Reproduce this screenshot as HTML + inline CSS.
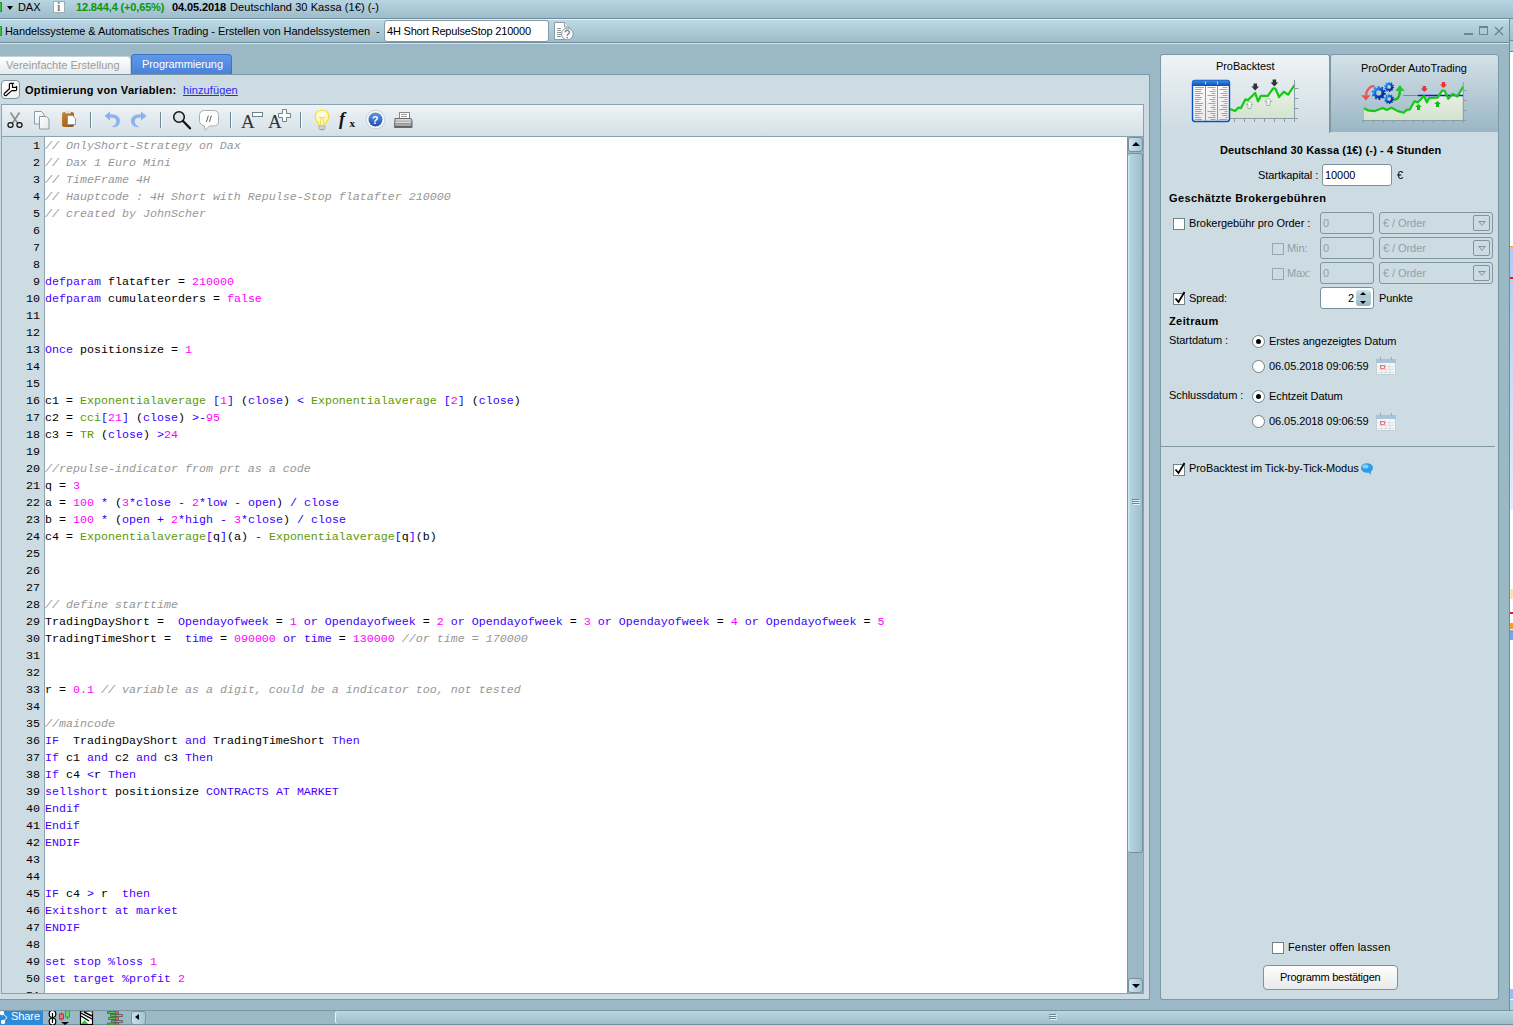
<!DOCTYPE html>
<html><head><meta charset="utf-8">
<style>
*{box-sizing:border-box;margin:0;padding:0}
html,body{width:1513px;height:1025px;overflow:hidden}
body{position:relative;background:#9bb8c6;font-family:"Liberation Sans",sans-serif;font-size:11px;color:#000;letter-spacing:-0.07px}
.a{position:absolute}
.t{position:absolute;white-space:pre;line-height:13px}
.bo{font-weight:bold;letter-spacing:0.2px}
/* bars */
#topbar{left:0;top:0;width:1513px;height:19px;background:linear-gradient(#b6d4e1,#9ebccb);border-bottom:1px solid #6f8d9a}
#titlebar{left:0;top:19px;width:1509px;height:24px;background:linear-gradient(#bad8e5,#9fbccb);border-top:1px solid #dff2fa;border-bottom:1px solid #6f8c99}
#band{left:0;top:43px;width:1509px;height:1px;background:#d3e6ee}
#rightedge{left:1509px;top:19px;width:1px;height:991px;background:#6f8c99}
#bg2{left:1510px;top:19px;width:3px;height:991px;background:#fff}
/* left panel */
#lp{left:0;top:74px;width:1150px;height:926px;background:#cddbe2;border:1px solid #7d98a5;border-left:none}
#toolbar{left:1px;top:104px;width:1143px;height:32px;background:linear-gradient(#eef3f6,#d4e0e6);border:1px solid #89a4b0;border-bottom:none}
#editor{left:1px;top:136px;width:1143px;height:858px;background:#fff;border:1px solid #89a4b0;overflow:hidden}
#gutter{position:absolute;left:0;top:0;width:43px;height:856px;background:#cddbe2;border-right:1px solid #8aa3ae}
#nums{position:absolute;left:0;top:1px;width:38px;text-align:right;font-family:"Liberation Mono",monospace;font-size:11.67px;line-height:17px;white-space:pre;color:#000;letter-spacing:0}
#code{position:absolute;left:43px;top:1px;font-family:"Liberation Mono",monospace;font-size:11.67px;line-height:17px;white-space:pre;color:#000;letter-spacing:0}
#code i{font-style:normal}
#code .c{color:#979797;font-style:italic}
#code .k{color:#4800ff}
#code .b{color:#3800ff}
#code .n{color:#ff00ff}
#code .f{color:#609a00}
#code .o{color:#2000ff}
#vscroll{position:absolute;left:1125px;top:0;width:16px;height:856px;background:#9cb8c6;border-left:1px solid #7b96a2}
.sbtn{position:absolute;left:0;width:15px;height:15px;border-radius:3px;background:linear-gradient(90deg,#cfe6f0,#a3c2cf);border:1px solid #7690a0}
#thumb{position:absolute;left:0;top:16px;width:15px;height:700px;border-radius:3px;background:linear-gradient(90deg,#d6eef8 0,#b4d4e1 15%,#9fbecb 100%);border:1px solid #7690a0;border-left:none}
/* tabs */
#tab1{left:0;top:56px;width:131px;height:18px;background:linear-gradient(#ffffff,#e6eaec);border-radius:0 4px 0 0;border:1px solid #c6d2d8;border-left:none;border-bottom:none}
#tab2{left:131px;top:54px;width:101px;height:20px;background:linear-gradient(#5e98ea,#4a82da);border-radius:4px 4px 0 0;border:1px solid #3d72c6;border-bottom:none}
/* right panel */
#rp{left:1160px;top:132px;width:339px;height:868px;background:#cddbe2;border:1px solid #7d98a5;border-top:none;border-radius:0 0 3px 3px}
#rtab1{left:1160px;top:54px;width:170px;height:79px;background:linear-gradient(#eef3f5,#cddbe2);border:1px solid #7d98a5;border-bottom:none;border-radius:3px 3px 0 0}
#rtab2{left:1330px;top:54px;width:169px;height:79px;background:linear-gradient(#d4e1e8,#9ab6c5);border:1px solid #7d98a5;border-radius:3px 3px 0 0}
#statusbar{left:0;top:1010px;width:1513px;height:15px;background:#9bb8c6;border-top:1px solid #7a96a3}
.inp{position:absolute;background:#fff;border:1px solid #7a909a;border-radius:3px}
.dis{position:absolute;background:#cddbe2;border:1px solid #7f959f;border-radius:3px}
.dd{position:absolute;width:17px;height:16px;border:1px solid #7f959f;border-radius:2px}
.dd:after{content:"";position:absolute;left:4px;top:5px;border-left:4px solid transparent;border-right:4px solid transparent;border-top:5px solid #7f959f}
.dd:before{content:"";position:absolute;left:5.5px;top:6px;border-left:2.5px solid transparent;border-right:2.5px solid transparent;border-top:3px solid #cddbe2;z-index:1}
.cb{position:absolute;width:12px;height:12px;background:#fff;border:1px solid #6f838c}
.cbd{position:absolute;width:12px;height:12px;background:#cddbe2;border:1px solid #94a8b2}
.rad{position:absolute;width:13px;height:13px;border-radius:50%;background:#fff;border:1px solid #6f838c}
.rad.on:after{content:"";position:absolute;left:3px;top:3px;width:5px;height:5px;border-radius:50%;background:#000}
.g{color:#8da1ab}
</style></head><body>
<div id="topbar" class="a"></div>
<div class="a" style="left:0;top:2px;width:2px;height:10px;background:#3cc03c;border:1px solid #1d9a1d;border-left:none"></div>
<div class="a" style="left:7px;top:6px;width:0;height:0;border-left:3.5px solid transparent;border-right:3.5px solid transparent;border-top:4px solid #000"></div>
<div class="t" style="left:18px;top:1px">DAX</div>
<div class="a" style="left:53px;top:1px;width:12px;height:12px;background:#fff;border:1px solid #a2acb0"></div>
<div class="t" style="left:57px;top:1px;font-size:12px;font-weight:bold;color:#7a8286;font-family:'Liberation Serif',serif">i</div>
<div class="t bo" style="left:76px;top:1px;color:#0b960b;letter-spacing:-0.15px">12.844,4 (+0,65%)</div>
<div class="t bo" style="left:172px;top:1px;letter-spacing:-0.1px">04.05.2018</div>
<div class="t" style="left:230px;top:1px;letter-spacing:0.08px">Deutschland 30 Kassa (1€) (-)</div>

<div id="titlebar" class="a"></div>
<div id="band" class="a"></div>
<div class="a" style="left:0;top:26px;width:2px;height:10px;background:#3cc03c;border:1px solid #1d9a1d;border-left:none"></div>
<div class="t" style="left:5px;top:25px">Handelssysteme &amp; Automatisches Trading - Erstellen von Handelssystemen  -</div>
<div class="inp" style="left:384px;top:20px;width:165px;height:22px;border-color:#8699a2"></div>
<div class="t" style="left:387px;top:25px;letter-spacing:-0.2px">4H Short RepulseStop 210000</div>
<svg class="a" style="left:550px;top:18px" width="30" height="26" viewBox="0 0 30 26"><path d="M4.5 4.5H14.5L19 9V21.5H4.5Z" fill="#fff" stroke="#8e9ba1"/><path d="M14.5 4.5V9H19" fill="#f2f2f2" stroke="#8e9ba1"/><path d="M7 10.5h4M7 12.5h4M7 14.5h4M7 16.5h4M7 18.5h4" stroke="#7f8b91" stroke-width=".9"/><circle cx="17.3" cy="16" r="5.8" fill="#fafafa" stroke="#8e9ba1"/><path d="M15.2 14.3a2.1 2.1 0 1 1 3 1.9c-.7.35-.9.8-.9 1.5" fill="none" stroke="#7c888e" stroke-width="1.4"/><circle cx="17.3" cy="19.6" r=".85" fill="#7c888e"/></svg>
<div class="a" style="left:1464px;top:33px;width:9px;height:2px;background:#6c8592"></div>
<div class="a" style="left:1479px;top:26px;width:9px;height:9px;border:1px solid #6c8592;border-top-width:2px"></div>
<svg class="a" style="left:1494px;top:26px" width="10" height="10"><path d="M1 1L9 9M9 1L1 9" stroke="#6c8592" stroke-width="1.4"/></svg>
<div id="rightedge" class="a"></div>
<div id="bg2" class="a"></div>

<div id="tab1" class="a"></div>
<div class="t" style="left:6px;top:59px;color:#9c9c9c;letter-spacing:0.02px">Vereinfachte Erstellung</div>
<div id="tab2" class="a"></div>
<div class="t" style="left:142px;top:58px;color:#fff">Programmierung</div>

<div id="lp" class="a"></div>
<div class="a" style="left:1px;top:80px;width:19px;height:19px;background:linear-gradient(135deg,#fff,#eee);border:1px solid #7d929b;border-radius:4px"></div>
<svg class="a" style="left:0;top:76px" width="24" height="26" viewBox="0 0 24 26"><path d="M9.4 12.7V8.4Q9.4 7.3 10.4 7.3H13.6L12.5 7.8V11.4H16.2L16.6 10.5V13.5Q16.6 14.6 15.5 14.6H11.7L6.6 19.2Q5.3 20.2 4.4 19.1Q3.7 18.1 4.6 17.3Z" fill="#fff" stroke="#000" stroke-width="1.2" stroke-linejoin="round"/></svg>
<div class="t bo" style="left:25px;top:84px;letter-spacing:0.3px">Optimierung von Variablen:</div>
<div class="t" style="left:183px;top:84px;color:#2b2bf0;text-decoration:underline;letter-spacing:0.1px">hinzufügen</div>

<div id="toolbar" class="a"></div>
<svg class="a" style="left:0;top:104px" width="420" height="33" viewBox="0 0 420 33">
<defs>
<linearGradient id="gpg" x1="0" y1="0" x2="1" y2="1"><stop offset="0" stop-color="#fff"/><stop offset="1" stop-color="#e3e6e8"/></linearGradient>
<linearGradient id="gbr" x1="0" y1="0" x2="1" y2="1"><stop offset="0" stop-color="#c88a3a"/><stop offset="1" stop-color="#8f4f10"/></linearGradient>
<linearGradient id="gbl" x1="0" y1="0" x2="0" y2="1"><stop offset="0" stop-color="#5f95e6"/><stop offset="1" stop-color="#1e4fb0"/></linearGradient>
<linearGradient id="gpr" x1="0" y1="0" x2="0" y2="1"><stop offset="0" stop-color="#e8e8e8"/><stop offset=".5" stop-color="#9a9a9a"/><stop offset="1" stop-color="#555"/></linearGradient>
</defs>
<path d="M10.5 8.5L17.5 19M19.5 8.5L12.5 19" stroke="#8c8c8c" stroke-width="1.6"/>
<ellipse cx="10.5" cy="21" rx="2.6" ry="2.3" fill="none" stroke="#111" stroke-width="1.2"/>
<ellipse cx="19.5" cy="21" rx="2.6" ry="2.3" fill="none" stroke="#111" stroke-width="1.2"/>
<path d="M34.5 7.5h7l2.5 2.5v10h-9.5z" fill="url(#gpg)" stroke="#8c9ca4"/>
<path d="M39.5 12.5h7l2.5 2.5v10h-9.5z" fill="url(#gpg)" stroke="#8c9ca4"/>
<rect x="62" y="8" width="12" height="15" rx="2" fill="url(#gbr)"/>
<rect x="65" y="7" width="6" height="2.5" rx="1" fill="#ddd"/>
<path d="M67.5 11.5h5l3 3v6h-8z" fill="#fff" stroke="#8c9ca4"/>
<path d="M90.5 8v16M160.5 8v16M230.5 8v16M300.5 8v16" stroke="#6d8a99"/>
<path d="M91.5 8v16M161.5 8v16M231.5 8v16M301.5 8v16" stroke="#f3fbff"/>
<path d="M104.5 12L110 7.5V16.5Z" fill="#88b0ee"/><path d="M109 10.5C117 9.5 121.5 14 119.5 19.5C118 23 114.5 23.5 111.5 23C114.5 22 116.5 20 116.3 17C116 14 113 13.2 109 13.5Z" fill="#8cb4ee"/>
<path d="M146.5 12L141 7.5V16.5Z" fill="#88b0ee"/><path d="M142 10.5C134 9.5 129.5 14 131.5 19.5C133 23 136.5 23.5 139.5 23C136.5 22 134.5 20 134.7 17C135 14 138 13.2 142 13.5Z" fill="#8cb4ee"/>
<circle cx="179" cy="13" r="5.3" fill="#dde2e5" stroke="#111" stroke-width="1.5"/>
<path d="M183 17L190 24.3" stroke="#111" stroke-width="2.3" stroke-linecap="round"/>
<path d="M204.5 6.5H213.5Q218.5 6.5 218.5 11.5V17Q218.5 22 213.5 22H209.5L205 26.2L204.4 21.8Q199.5 21 199.5 16.5V11.5Q199.5 6.5 204.5 6.5Z" fill="#fff" stroke="#a9adb0"/>
<path d="M206.4 18l2-6.5M209.4 18l2-6.5" stroke="#555" stroke-width=".9"/>
<text x="241" y="24" font-family="Liberation Serif" font-size="19" fill="#333">A</text>
<rect x="252.5" y="8.5" width="10" height="4" fill="#fff" stroke="#6f838c"/>
<text x="268" y="24" font-family="Liberation Serif" font-size="19" fill="#333">A</text>
<path d="M282.5 5.5h4v4h4v4h-4v4h-4v-4h-4v-4h4z" fill="#fff" stroke="#6f838c"/>
<radialGradient id="gbulb" cx=".45" cy=".3" r=".7"><stop offset="0" stop-color="#fffef0"/><stop offset="1" stop-color="#fff690"/></radialGradient>
<path d="M319 21.8L318.6 19Q315.3 16.5 315.3 12.3Q315.3 6.2 322 6.2Q328.7 6.2 328.7 12.3Q328.7 16.5 325.4 19L325 21.8Z" fill="url(#gbulb)" stroke="#f3dc30" stroke-width="1.1"/>
<path d="M318.6 13.6H325.4M320.3 13.8Q322 17.2 323.7 13.8M320.6 15.5V21.5M323.4 15.5V21.5" stroke="#e9cf60" stroke-width=".8" fill="none"/>
<rect x="319" y="22" width="6" height="3.2" fill="#d4d4d4" stroke="#a0a0a0" stroke-width=".6"/>
<rect x="320.5" y="25" width="3" height="1.2" fill="#999"/>
<text x="339" y="21" font-family="Liberation Serif" font-style="italic" font-weight="bold" font-size="18" fill="#111">f</text>
<text x="349.5" y="23" font-family="Liberation Serif" font-weight="bold" font-size="11" fill="#111">x</text>
<circle cx="375.5" cy="15.5" r="9.3" fill="#f6f9fa" stroke="#c7d1d5"/>
<circle cx="375.5" cy="15.5" r="7" fill="url(#gbl)"/>
<text x="371.8" y="19.8" font-family="Liberation Sans" font-weight="bold" font-size="11" fill="#fff">?</text>
<rect x="399.5" y="8.5" width="10" height="6" fill="#fff" stroke="#888"/>
<path d="M401 10.5h6M401 12.5h6" stroke="#999"/>
<path d="M395 14.5h16l1 2v7h-17.5z" fill="url(#gpr)" stroke="#666"/>
<path d="M395 18.5h16M395 21h16" stroke="#eee" stroke-width=".8"/>
</svg>

<div id="editor" class="a">
<div id="gutter"></div>
<div id="nums">1
2
3
4
5
6
7
8
9
10
11
12
13
14
15
16
17
18
19
20
21
22
23
24
25
26
27
28
29
30
31
32
33
34
35
36
37
38
39
40
41
42
43
44
45
46
47
48
49
50
51</div>
<div id="code"><i class=c>// OnlyShort-Strategy on Dax</i>
<i class=c>// Dax 1 Euro Mini</i>
<i class=c>// TimeFrame 4H</i>
<i class=c>// Hauptcode : 4H Short with Repulse-Stop flatafter 210000</i>
<i class=c>// created by JohnScher</i>



<i class=k>defparam</i> flatafter = <i class=n>210000</i>
<i class=k>defparam</i> cumulateorders = <i class=n>false</i>


<i class=k>Once</i> positionsize = <i class=n>1</i>


c1 = <i class=f>Exponentialaverage</i> <i class=o>[</i><i class=n>1</i><i class=o>]</i> (<i class=b>close</i>) <i class=o>&lt;</i> <i class=f>Exponentialaverage</i> <i class=o>[</i><i class=n>2</i><i class=o>]</i> (<i class=b>close</i>)
c2 = <i class=f>cci</i><i class=o>[</i><i class=n>21</i><i class=o>]</i> (<i class=b>close</i>) <i class=o>&gt;</i><i class=o>-</i><i class=n>95</i>
c3 = <i class=f>TR</i> (<i class=b>close</i>) <i class=o>&gt;</i><i class=n>24</i>

<i class=c>//repulse-indicator from prt as a code</i>
q = <i class=n>3</i>
a = <i class=n>100</i> <i class=o>*</i> (<i class=n>3</i><i class=o>*</i><i class=b>close</i> <i class=o>-</i> <i class=n>2</i><i class=o>*</i><i class=b>low</i> <i class=o>-</i> <i class=b>open</i>) <i class=o>/</i> <i class=b>close</i>
b = <i class=n>100</i> <i class=o>*</i> (<i class=b>open</i> <i class=o>+</i> <i class=n>2</i><i class=o>*</i><i class=b>high</i> <i class=o>-</i> <i class=n>3</i><i class=o>*</i><i class=b>close</i>) <i class=o>/</i> <i class=b>close</i>
c4 = <i class=f>Exponentialaverage</i><i class=o>[</i>q<i class=o>]</i>(a) <i class=o>-</i> <i class=f>Exponentialaverage</i><i class=o>[</i>q<i class=o>]</i>(b)



<i class=c>// define starttime</i>
TradingDayShort =  <i class=b>Opendayofweek</i> = <i class=n>1</i> <i class=k>or</i> <i class=b>Opendayofweek</i> = <i class=n>2</i> <i class=k>or</i> <i class=b>Opendayofweek</i> = <i class=n>3</i> <i class=k>or</i> <i class=b>Opendayofweek</i> = <i class=n>4</i> <i class=k>or</i> <i class=b>Opendayofweek</i> = <i class=n>5</i>
TradingTimeShort =  <i class=b>time</i> = <i class=n>090000</i> <i class=k>or</i> <i class=b>time</i> = <i class=n>130000</i> <i class=c>//or time = 170000</i>


r = <i class=n>0.1</i> <i class=c>// variable as a digit, could be a indicator too, not tested</i>

<i class=c>//maincode</i>
<i class=k>IF</i>  TradingDayShort <i class=k>and</i> TradingTimeShort <i class=k>Then</i>
<i class=k>If</i> c1 <i class=k>and</i> c2 <i class=k>and</i> c3 <i class=k>Then</i>
<i class=k>If</i> c4 <i class=o>&lt;</i>r <i class=k>Then</i>
<i class=k>sellshort</i> positionsize <i class=k>CONTRACTS</i> <i class=k>AT</i> <i class=k>MARKET</i>
<i class=k>Endif</i>
<i class=k>Endif</i>
<i class=k>ENDIF</i>


<i class=k>IF</i> c4 <i class=o>&gt;</i> r  <i class=k>then</i>
<i class=k>Exitshort</i> <i class=k>at</i> <i class=k>market</i>
<i class=k>ENDIF</i>

<i class=k>set</i> <i class=k>stop</i> <i class=k>%loss</i> <i class=n>1</i>
<i class=k>set</i> <i class=k>target</i> <i class=k>%profit</i> <i class=n>2</i>
</div>
<div id="vscroll">
<div class="sbtn" style="top:0"><div style="position:absolute;left:3px;top:4px;border-left:4px solid transparent;border-right:4px solid transparent;border-bottom:4px solid #000"></div></div>
<div id="thumb"><div style="position:absolute;left:4px;top:345px;width:7px;height:1px;background:#6f8590;box-shadow:0 2px 0 #6f8590,0 4px 0 #6f8590,1px 1px 0 #e0f2fa,1px 3px 0 #e0f2fa,1px 5px 0 #e0f2fa"></div></div>
<div class="sbtn" style="top:841px"><div style="position:absolute;left:3px;top:5px;border-left:4px solid transparent;border-right:4px solid transparent;border-top:4px solid #000"></div></div>
</div>
</div>

<div id="rtab2" class="a"></div>
<div id="rp" class="a"></div>
<div id="rtab1" class="a"></div>
<div class="t" style="left:1216px;top:60px">ProBacktest</div>
<div class="t" style="left:1361px;top:62px">ProOrder AutoTrading</div>
<svg class="a" style="left:1161px;top:55px" width="338" height="78" viewBox="1161 55 338 78">
<defs>
<linearGradient id="ghd" x1="0" y1="0" x2="0" y2="1"><stop offset="0" stop-color="#3c8ee0"/><stop offset="1" stop-color="#0a48be"/></linearGradient>
<linearGradient id="gcol" x1="0" y1="0" x2="0" y2="1"><stop offset="0" stop-color="#fff"/><stop offset="1" stop-color="#e8e8e8"/></linearGradient>
<linearGradient id="garea" x1="0" y1="0" x2="0" y2="1"><stop offset="0" stop-color="#eef3ea"/><stop offset="1" stop-color="#d3e3cf"/></linearGradient>
<radialGradient id="ggear" cx=".35" cy=".3" r=".8"><stop offset="0" stop-color="#4aa0f0"/><stop offset="1" stop-color="#0b3aa8"/></radialGradient>
</defs>
<path d="M1230 118.5V109L1235 111 1238.2 107.7 1241 108.1 1245.3 99.4 1247.7 100.2 1255.2 93 1258 101.4 1260.8 95.8 1267.9 95.8 1273.1 88.3 1275.5 88.7 1279 97 1283.8 91.8 1288.2 94.6 1294.1 85.1V118.5z" fill="url(#garea)"/>
<path d="M1230 109L1235 111 1238.2 107.7 1241 108.1 1245.3 99.4 1247.7 100.2 1255.2 93 1258 101.4 1260.8 95.8 1267.9 95.8 1273.1 88.3 1275.5 88.7 1279 97 1283.8 91.8 1288.2 94.6 1294.5 85" fill="none" stroke="#14c814" stroke-width="2.2" stroke-linejoin="round"/>
<path d="M1294.5 80v42M1230 118.5h68M1294.5 88.5h4M1294.5 98.5h4M1294.5 108.5h4M1234.5 118.5v3.5M1244.5 118.5v3.5M1254.5 118.5v3.5M1264.5 118.5v3.5M1274.5 118.5v3.5M1284.5 118.5v3.5" stroke="#8a9ea8" stroke-width="1"/>
<path d="M1253.5 83.5h3.5v3h2l-3.8 4-3.8-4h2z" fill="#333"/>
<path d="M1272.7 79.5h3.5v3h2l-3.8 4-3.8-4h2z" fill="#333"/>
<path d="M1249.5 101l3.3 3.5h-1.8v4h-3v-4h-1.8z" fill="#fff" stroke="#8da0a8" stroke-width=".8"/>
<path d="M1268.4 98l3.3 3.5h-1.8v4h-3v-4h-1.8z" fill="#fff" stroke="#8da0a8" stroke-width=".8"/>
<rect x="1192.5" y="80.5" width="37" height="41" rx="2.5" fill="url(#gcol)" stroke="#0b4fc4" stroke-width="1.4"/>
<path d="M1192 83a2.5 2.5 0 0 1 2.5-2.5h32.5a2.5 2.5 0 0 1 2.5 2.5v3h-37.5z" fill="url(#ghd)"/>
<path d="M1205.5 86v35M1217.5 86v35" stroke="#8899a2"/>
<path d="M1205.5 81.5v3M1217.5 81.5v3" stroke="#b9d6f2"/>
<path d="M1195 87.5h9M1195 89.5h7M1195 91.5h6M1195 93.5h8M1195 95.5h5M1195 97.5h7M1195 99.5h6M1195 101.5h4M1195 103.5h8M1195 105.5h7M1195 107.5h5M1195 109.5h7M1195 111.5h6M1195 113.5h8M1195 115.5h4M1195 117.5h6M1195 119.5h7" stroke="#8f8f8f" stroke-width=".8"/>
<path d="M1215.5 87.5h-8M1215.5 89.5h-3M1215.5 91.5h-6M1215.5 93.5h-4M1215.5 95.5h-8M1215.5 97.5h-3M1215.5 99.5h-6M1215.5 101.5h-4M1215.5 103.5h-7M1215.5 105.5h-3M1215.5 107.5h-5M1215.5 109.5h-3M1215.5 111.5h-8M1215.5 113.5h-5M1215.5 115.5h-3M1215.5 117.5h-7M1215.5 119.5h-5" stroke="#8f8f8f" stroke-width=".8"/>
<path d="M1227.5 87.5h-5M1227.5 89.5h-8M1227.5 91.5h-4M1227.5 93.5h-7M1227.5 95.5h-5M1227.5 97.5h-8M1227.5 99.5h-3M1227.5 101.5h-6M1227.5 103.5h-3M1227.5 105.5h-7M1227.5 107.5h-5M1227.5 109.5h-8M1227.5 111.5h-3M1227.5 113.5h-6M1227.5 115.5h-5M1227.5 117.5h-2M1227.5 119.5h-8" stroke="#8f8f8f" stroke-width=".8"/>
<!-- proorder -->
<path d="M1364 120.4V108.3L1367.7 110.3 1374.8 111.1 1382.8 107.9 1386.7 109.9 1391.5 107.7 1397.9 111.1 1403.8 112.7 1406.6 109.9 1409.8 109.5 1414.5 101.2 1417.7 102.4 1424 96 1426.8 102.4 1429.2 98 1437.5 97.6 1442.3 90.5 1444.7 90.9 1448.3 98.8 1452.6 94 1457.4 96.4 1462.9 86.9V120.4z" fill="url(#garea)"/>
<path d="M1403 95.5h14.7" stroke="#888" stroke-width="1"/>
<path d="M1417.7 95.5h45.6" stroke="#1010f0" stroke-width="1.3"/>
<path d="M1364 108.3L1367.7 110.3 1374.8 111.1 1382.8 107.9 1386.7 109.9 1391.5 107.7 1397.9 111.1 1403.8 112.7 1406.6 109.9 1409.8 109.5 1414.5 101.2 1417.7 102.4 1424 96 1426.8 102.4 1429.2 98 1437.5 97.6 1442.3 90.5 1444.7 90.9 1448.3 98.8 1452.6 94 1457.4 96.4 1463.3 86.5" fill="none" stroke="#14c814" stroke-width="2.2" stroke-linejoin="round"/>
<path d="M1463.3 82v41M1362 120.5h104M1463.3 90.5h3M1463.3 100.5h3M1463.3 110.5h3M1363.5 120.5v2.5M1373.5 120.5v2.5M1383.5 120.5v2.5M1393.5 120.5v2.5M1403.5 120.5v2.5M1413.5 120.5v2.5M1423.5 120.5v2.5M1433.5 120.5v2.5M1443.5 120.5v2.5M1453.5 120.5v2.5" stroke="#8a9ea8" stroke-width="1"/>
<path d="M1422.8 86h3.2v2.5h2l-3.6 3.5-3.6-3.5h2z" fill="#f03030"/>
<path d="M1441.9 82h3.2v2.5h2l-3.6 3.5-3.6-3.5h2z" fill="#f03030"/>
<path d="M1418.5 104l3.3 3h-1.8v3h-3v-3h-1.8z" fill="#14b814"/>
<path d="M1437.5 101l3.3 3h-1.8v3h-3v-3h-1.8z" fill="#14b814"/>
<path d="M1374.5 86.2c-4 -.6 -7.8 3 -8.6 9" fill="none" stroke="#f05858" stroke-width="2.4"/>
<path d="M1361.3 95.2h9.2l-4.6 5.4z" fill="#f05050"/>
<path d="M1393.8 99.8c4 .3 6.2 -3.5 6 -9" fill="none" stroke="#1cb81c" stroke-width="2.4"/>
<path d="M1395.3 90.9h9.2l-4.6 -6z" fill="#28c828"/>
<linearGradient id="ggear2" x1="0" y1="0" x2="1" y2="1"><stop offset="0" stop-color="#2e9cf0"/><stop offset=".55" stop-color="#0a48c0"/><stop offset="1" stop-color="#001a98"/></linearGradient>
<g fill="none" stroke="url(#ggear2)">
<circle cx="1378.8" cy="92.9" r="4.1" stroke-width="3"/><circle cx="1378.8" cy="92.9" r="6.1" stroke-width="1.8" stroke-dasharray="1.9 1.93"/>
<circle cx="1389.1" cy="86.9" r="2.9" stroke-width="2"/><circle cx="1389.1" cy="86.9" r="4.3" stroke-width="1.4" stroke-dasharray="1.3 1.4"/>
<circle cx="1389.1" cy="99" r="2.9" stroke-width="2"/><circle cx="1389.1" cy="99" r="4.3" stroke-width="1.4" stroke-dasharray="1.3 1.4"/>
</g>
</svg>

<div class="t bo" style="left:1220px;top:144px;letter-spacing:0.12px">Deutschland 30 Kassa (1€) (-) - 4 Stunden</div>
<div class="t" style="left:1258px;top:169px">Startkapital :</div>
<div class="inp" style="left:1322px;top:164px;width:70px;height:22px"></div>
<div class="t" style="left:1325px;top:169px">10000</div>
<div class="t" style="left:1397px;top:169px">€</div>
<div class="t bo" style="left:1169px;top:192px;letter-spacing:0.4px">Geschätzte Brokergebühren</div>

<div class="cb" style="left:1173px;top:218px"></div>
<div class="t" style="left:1189px;top:217px">Brokergebühr pro Order :</div>
<div class="dis" style="left:1320px;top:212px;width:54px;height:22px"></div>
<div class="t g" style="left:1323px;top:217px">0</div>
<div class="dis" style="left:1379px;top:212px;width:114px;height:22px"></div>
<div class="t g" style="left:1383px;top:217px">€ / Order</div>
<div class="dd" style="left:1473px;top:215px"></div>

<div class="cbd" style="left:1272px;top:243px"></div>
<div class="t g" style="left:1287px;top:242px">Min:</div>
<div class="dis" style="left:1320px;top:237px;width:54px;height:22px"></div>
<div class="t g" style="left:1323px;top:242px">0</div>
<div class="dis" style="left:1379px;top:237px;width:114px;height:22px"></div>
<div class="t g" style="left:1383px;top:242px">€ / Order</div>
<div class="dd" style="left:1473px;top:240px"></div>

<div class="cbd" style="left:1272px;top:268px"></div>
<div class="t g" style="left:1287px;top:267px">Max:</div>
<div class="dis" style="left:1320px;top:262px;width:54px;height:22px"></div>
<div class="t g" style="left:1323px;top:267px">0</div>
<div class="dis" style="left:1379px;top:262px;width:114px;height:22px"></div>
<div class="t g" style="left:1383px;top:267px">€ / Order</div>
<div class="dd" style="left:1473px;top:265px"></div>

<div class="cb" style="left:1173px;top:293px"></div>
<svg class="a" style="left:1174px;top:290px" width="12" height="14"><path d="M1.5 8.5l3 3.5L10.5 2" fill="none" stroke="#000" stroke-width="1.8"/></svg>
<div class="t" style="left:1189px;top:292px">Spread:</div>
<div class="inp" style="left:1320px;top:287px;width:54px;height:22px"></div>
<div class="t" style="left:1348px;top:292px">2</div>
<div class="a" style="left:1356px;top:290px;width:15px;height:8px;background:linear-gradient(#cde2ea,#a9c5d1);border-radius:3px 3px 0 0"></div>
<div class="a" style="left:1356px;top:298px;width:15px;height:8px;background:linear-gradient(#b7d1dc,#95b4c2);border-radius:0 0 3px 3px"></div>
<div class="a" style="left:1360px;top:292px;border-left:3.5px solid transparent;border-right:3.5px solid transparent;border-bottom:3.5px solid #000"></div>
<div class="a" style="left:1360px;top:301px;border-left:3.5px solid transparent;border-right:3.5px solid transparent;border-top:3.5px solid #000"></div>
<div class="t" style="left:1379px;top:292px">Punkte</div>

<div class="t bo" style="left:1169px;top:315px;letter-spacing:0.4px">Zeitraum</div>
<div class="t" style="left:1169px;top:334px">Startdatum :</div>
<div class="rad on" style="left:1252px;top:335px"></div>
<div class="t" style="left:1269px;top:335px">Erstes angezeigtes Datum</div>
<div class="rad" style="left:1252px;top:360px"></div>
<div class="t" style="left:1269px;top:360px">06.05.2018 09:06:59</div>
<div class="t" style="left:1169px;top:389px">Schlussdatum :</div>
<div class="rad on" style="left:1252px;top:390px"></div>
<div class="t" style="left:1269px;top:390px">Echtzeit Datum</div>
<div class="rad" style="left:1252px;top:415px"></div>
<div class="t" style="left:1269px;top:415px">06.05.2018 09:06:59</div>
<svg class="a" style="left:1375px;top:356px" width="22" height="76" viewBox="0 0 22 76">
<g id="cal"><rect x="1.5" y="3.5" width="19" height="15" fill="#f4f6f7" stroke="#c4cfd5"/><rect x="1" y="3" width="20" height="4" fill="#a7c4d8"/><path d="M5.5 1v3M16.5 1v3" stroke="#9ab"/><path d="M3 10.5h16M3 13.5h16M3 16.5h16M6.5 8v10M10.5 8v10M14.5 8v10" stroke="#d4dce0" stroke-width=".8"/><rect x="5.5" y="9.5" width="4" height="3" fill="none" stroke="#e06060" stroke-width=".8"/></g>
<use href="#cal" y="56"/>
</svg>

<div class="a" style="left:1161px;top:446px;width:334px;height:1px;background:#7f98a4"></div>
<div class="cb" style="left:1173px;top:464px"></div>
<svg class="a" style="left:1174px;top:461px" width="12" height="14"><path d="M1.5 8.5l3 3.5L10.5 2" fill="none" stroke="#000" stroke-width="1.8"/></svg>
<div class="t" style="left:1189px;top:462px">ProBacktest im Tick-by-Tick-Modus</div>
<svg class="a" style="left:1360px;top:462px" width="15" height="14"><ellipse cx="7" cy="6" rx="6" ry="4.8" fill="#2a9de8"/><ellipse cx="5.5" cy="4.5" rx="3" ry="2" fill="#8fd0f8"/><path d="M8 10l3 3-0.5-4z" fill="#2a9de8"/></svg>

<div class="cb" style="left:1272px;top:942px"></div>
<div class="t" style="left:1288px;top:941px;letter-spacing:0.15px">Fenster offen lassen</div>
<div class="a" style="left:1263px;top:965px;width:135px;height:25px;background:linear-gradient(#fdfdfd,#e8eaeb);border:1px solid #7f929b;border-radius:4px"></div>
<div class="t" style="left:1280px;top:971px;letter-spacing:-0.25px">Programm bestätigen</div>

<div id="statusbar" class="a"></div>
<div class="a" style="left:0;top:1011px;width:43px;height:14px;background:#2c8ad8"></div>
<svg class="a" style="left:0;top:1011px" width="10" height="14"><circle cx="2" cy="2" r="2.2" fill="#fff"/><circle cx="3" cy="11" r="2.2" fill="#fff"/><path d="M2 2L7 6.5 3 11" fill="none" stroke="#fff" stroke-width="1"/></svg>
<div class="t" style="left:11px;top:1010px;color:#fff">Share</div>

<div class="a" style="left:335px;top:1011px;width:1178px;height:13px;background:linear-gradient(#b9d7e3,#9ebdca);border-left:1px solid #e8f6fb;border-radius:3px 0 0 3px"></div>
<div class="a" style="left:43px;top:1024px;width:1470px;height:1px;background:#70909d"></div>
<div class="a" style="left:1049px;top:1014px;width:7px;height:1px;background:#6f8590;box-shadow:0 2px 0 #6f8590,0 4px 0 #6f8590,1px 1px 0 #e0f2fa,1px 3px 0 #e0f2fa,1px 5px 0 #e0f2fa"></div>
<div class="a" style="left:131px;top:1011px;width:15px;height:14px;background:linear-gradient(90deg,#c9e2ec,#a6c4d1);border:1px solid #7b95a2;border-radius:3px"></div>
<div class="a" style="left:135px;top:1014px;border-top:3.5px solid transparent;border-bottom:3.5px solid transparent;border-right:4px solid #000"></div>
<svg class="a" style="left:46px;top:1011px" width="80" height="14" viewBox="46 1011 80 14">
<ellipse cx="52.5" cy="1014" rx="3.3" ry="3.5" fill="#fff" stroke="#000" stroke-width="1.2"/>
<ellipse cx="52.5" cy="1021.5" rx="3.3" ry="3.5" fill="#fff" stroke="#000" stroke-width="1.2"/>
<path d="M52.5 1013v10" stroke="#000" stroke-width="1.2"/>
<path d="M61.5 1012.5v8" stroke="#c02020"/><rect x="59.5" y="1014" width="4" height="5" fill="#f07070" stroke="#c02020" stroke-width=".8"/>
<path d="M67.5 1011v8" stroke="#20a020"/><rect x="65.5" y="1011" width="4" height="6" fill="#60e060" stroke="#20a020" stroke-width=".8"/>
<path d="M61 1022h8l-4 3z" fill="#000"/>
<rect x="80.5" y="1011" width="12" height="13.5" fill="#fff" stroke="#000" stroke-width="1.2"/>
<path d="M81 1013l11 6M81 1016l8 5M84 1012l8 4" stroke="#000" stroke-width="1.4"/>
<path d="M81 1024l3.5-4 3.5 4z" fill="#30c030"/><path d="M89 1011h3.5v3z" fill="#f06060"/>
<path d="M107.5 1011.5h8v2h-8zM110.5 1014.5h5v2h-5zM108.5 1017.5h7v2h-7zM111.5 1020.5h4v2h-4zM107.5 1023h8v2h-8z" fill="#40d040" stroke="#555" stroke-width=".8"/>
<path d="M115.5 1011.5h3v2h-3zM115.5 1014.5h7v2h-7zM115.5 1017.5h3v2h-3zM115.5 1020.5h7v2h-7zM115.5 1023h3v2h-3z" fill="#f08080" stroke="#555" stroke-width=".8"/>
</svg>
<div class="a" style="left:1510px;top:19px;width:3px;height:22px;background:linear-gradient(#b9d7e3,#9ebdca)"></div>
<div class="a" style="left:1510px;top:40px;width:3px;height:1px;background:#6f8c99"></div>
<div class="a" style="left:1510px;top:41px;width:3px;height:10px;background:#b3d0dc"></div>
<div class="a" style="left:1510px;top:51px;width:3px;height:1px;background:#6f8c99"></div>
<div class="a" style="left:1510px;top:246px;width:3px;height:1px;background:#f0a030"></div>
<div class="a" style="left:1510px;top:247px;width:3px;height:263px;background:linear-gradient(#b4ccf2,#e4edf9)"></div>
<div class="a" style="left:1510px;top:277px;width:3px;height:2px;background:#e02020"></div>
<div class="a" style="left:1510px;top:589px;width:3px;height:10px;background:#fbe3b8"></div>
<div class="a" style="left:1510px;top:612px;width:3px;height:2px;background:#e02020"></div>
<div class="a" style="left:1510px;top:623px;width:3px;height:6px;background:#f0a030"></div><div class="a" style="left:1510px;top:630px;width:3px;height:10px;background:#7fa2e6"></div>
<div class="a" style="left:1510px;top:989px;width:3px;height:10px;background:#9dbcf0"></div>
<div class="a" style="left:1510px;top:1000px;width:3px;height:10px;background:#b5d2de"></div>
</body></html>
